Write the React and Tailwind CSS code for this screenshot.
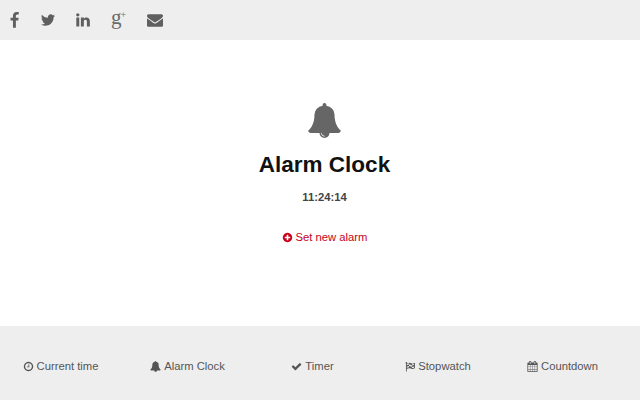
// Font Awesome 4 glyphs, the react-icons set only carries FA5+
const ICONS = {
  facebook: 'M1343 12v264h-157q-86 0-116 36t-30 108v189h293l-39 296h-254v759h-306v-759h-255v-296h255v-218q0-186 104-288.5t277-102.5q147 0 228 12z',
  twitter: 'M1684 408q-67 98-162 167 1 14 1 42 0 130-38 259.5t-115.5 248.5-184.5 210.5-258 146-323 54.5q-271 0-496-145 35 4 76 4 225 0 401-138-105-2-188-64.5t-114-159.5q33 5 61 5 43 0 85-11-112-23-185.5-111.5t-73.5-205.5v-4q68 38 146 41-66-44-105-115t-39-154q0-88 44-163 121 149 294.5 238.5t371.5 99.5q-8-38-8-74 0-134 94.5-228.5t228.5-94.5q140 0 236 102 109-21 205-78-37 115-142 178 93-10 186-50z',
  linkedin: 'M477 625v991h-330v-991h330zm21-306q1 73-50.5 122t-135.5 49h-2q-82 0-132-49t-50-122q0-74 51.5-122.5t134.5-48.5 133 48.5 51 122.5zm1166 729v568h-329v-530q0-105-40.5-164.5t-126.5-59.5q-63 0-105.5 34.5t-63.5 85.5q-11 30-11 81v553h-329q2-399 2-647t-1-296l-1-48h329v144h-2q20-32 41-56t56.5-52 87-43.5 114.5-15.5q171 0 275 113.5t104 332.5z',
  envelope: 'M1792 710v794q0 66-47 113t-113 47h-1472q-66 0-113-47t-47-113v-794q44 49 101 87 362 246 497 345 57 42 92.5 65.5t94.5 48 110 24.5h2q51 0 110-24.5t94.5-48 92.5-65.5q170-123 498-345 57-39 100-87zm0-294q0 79-49 151t-122 123q-376 261-468 325-10 7-42.5 30.5t-54 38-52 32.5-57.5 27-50 9h-2q-23 0-50-9t-57.5-27-52-32.5-54-38-42.5-30.5q-91-64-262-182.5t-205-142.5q-62-42-117-115.5t-55-136.5q0-78 41.5-130t118.5-52h1472q65 0 112.5 47t47.5 113z',
  bell: 'M912 1696q0-16-16-16-59 0-101.5-42.5t-42.5-101.5q0-16-16-16t-16 16q0 73 51.5 124.5t124.5 51.5q16 0 16-16zm816-288q0 52-38 90t-90 38h-448q0 106-75 181t-181 75-181-75-75-181h-448q-52 0-90-38t-38-90q50-42 91-88t85-119.5 74.5-158.5 50-206 19.5-260q0-152 117-282.5t307-158.5q-8-19-8-39 0-40 28-68t68-28 68 28 28 68q0 20-8 39 190 28 307 158.5t117 282.5q0 139 19.5 260t50 206 74.5 158.5 85 119.5 91 88z',
  plusCircle: 'M1344 960v-128q0-26-19-45t-45-19h-256v-256q0-26-19-45t-45-19h-128q-26 0-45 19t-19 45v256h-256q-26 0-45 19t-19 45v128q0 26 19 45t45 19h256v256q0 26 19 45t45 19h128q26 0 45-19t19-45v-256h256q26 0 45-19t19-45zm320-64q0 209-103 385.5t-279.5 279.5-385.5 103-385.5-103-279.5-279.5-103-385.5 103-385.5 279.5-279.5 385.5-103 385.5 103 279.5 279.5 103 385.5z',
  clock: 'M1024 544v448q0 14-9 23t-23 9h-320q-14 0-23-9t-9-23v-64q0-14 9-23t23-9h224v-352q0-14 9-23t23-9h64q14 0 23 9t9 23zm416 352q0-148-73-273t-198-198-273-73-273 73-198 198-73 273 73 273 198 198 273 73 273-73 198-198 73-273zm224 0q0 209-103 385.5t-279.5 279.5-385.5 103-385.5-103-279.5-279.5-103-385.5 103-385.5 279.5-279.5 385.5-103 385.5 103 279.5 279.5 103 385.5z',
  check: 'M1671 566q0 40-28 68l-724 724-136 136q-28 28-68 28t-68-28l-136-136-362-362q-28-28-28-68t28-68l136-136q28-28 68-28t68 28l294 295 656-657q28-28 68-28t68 28l136 136q28 28 28 68z',
  flag: 'M832 1000v-192q-181 16-384 117v185q205-96 384-110zm0-418v-197q-172 8-384 126v189q215-111 384-118zm832 463v-184q-235 116-384 71v-224q-20-6-39-15-5-3-33-17t-34.5-17-31.5-15-34.5-15.5-32.5-13-36-12.5-35-8.5-39.5-7.5-39.5-4-44-2q-23 0-49 3v222h19q102 0 192.5 29t197.5 82q19 9 39 15v188q42 17 91 17 120 0 293-92zm0-427v-189q-169 91-306 91-45 0-78-8v196q148 42 384-90zm-1152-318q0 35-17.5 64t-46.5 46v1266q0 14-9 23t-23 9h-64q-14 0-23-9t-9-23v-1266q-29-17-46.5-46t-17.5-64q0-53 37.5-90.5t90.5-37.5 90.5 37.5 37.5 90.5zm1280 64v763q0 39-35 57-10 5-17 9-218 116-369 116-88 0-158-35l-28-14q-64-33-99-48t-91-29-114-14q-102 0-235.5 44t-228.5 102q-15 9-33 9-16 0-32-8-32-19-32-56v-742q0-35 31-55 35-21 78.5-42.5t114-52 152.5-49.5 155-19q112 0 209 31t209 86q38 19 89 19 122 0 310-112 22-12 31-17 31-16 62 2 31 20 31 55z',
  calendar: 'M192 1664h288v-288h-288v288zm352 0h320v-288h-320v288zm-352-352h288v-320h-288v320zm352 0h320v-320h-320v320zm-352-384h288v-288h-288v288zm736 736h320v-288h-320v288zm-384-736h320v-288h-320v288zm768 736h288v-288h-288v288zm-384-352h320v-320h-320v320zm-352-864v-288q0-13-9.5-22.5t-22.5-9.5h-64q-13 0-22.5 9.5t-9.5 22.5v288q0 13 9.5 22.5t22.5 9.5h64q13 0 22.5-9.5t9.5-22.5zm736 864h288v-320h-288v320zm-384-384h320v-288h-320v288zm384 0h288v-288h-288v288zm32-480v-288q0-13-9.5-22.5t-22.5-9.5h-64q-13 0-22.5 9.5t-9.5 22.5v288q0 13 9.5 22.5t22.5 9.5h64q13 0 22.5-9.5t9.5-22.5zm384-64v1280q0 52-38 90t-90 38h-1408q-52 0-90-38t-38-90v-1280q0-52 38-90t90-38h128v-96q0-66 47-113t113-47h64q66 0 113 47t47 113v96h384v-96q0-66 47-113t113-47h64q66 0 113 47t47 113v96h128q52 0 90 38t38 90z',
}

const Fa = ({ name, size, className }) => (
  <svg viewBox="0 0 1792 1792" width={size} height={size} fill="currentColor" className={className}>
    <path d={ICONS[name]} />
  </svg>
)

const navItems = [
  { label: 'Current time', icon: 'clock', cls: 'pr-1' },
  { label: 'Alarm Clock', icon: 'bell', cls: '' },
  { label: 'Timer', icon: 'check', cls: '' },
  { label: 'Stopwatch', icon: 'flag', cls: '' },
  { label: 'Countdown', icon: 'calendar', cls: '' },
]

export default function App() {
  return (
    <div className="flex h-[400px] w-[640px] flex-col overflow-hidden bg-white font-['Liberation_Sans',Arial,sans-serif] text-[#333]">
      {/* Social bar */}
      <div className="flex h-10 shrink-0 items-center bg-[#eeeeee] pl-[6px] text-[#5f5f5f]">
        <Fa name="facebook" size={17} />
        <Fa name="twitter" size={16} className="ml-[17px]" />
        <Fa name="linkedin" size={16} className="ml-[19px]" />
        <div className="ml-[20px] -mt-[6px] flex w-[16px] font-['Liberation_Serif',serif] text-[21px] leading-none font-normal text-[#6a6a6a]">
          g<span className="-ml-[1px] text-[10px] leading-[16px]">+</span>
        </div>
        <Fa name="envelope" size={16} className="ml-[20px]" />
      </div>

      {/* Main */}
      <div className="flex flex-1 flex-col items-center pt-[63px] pl-[9px]">
        <Fa name="bell" size={35} className="text-[#666]" />
        <h1 className="mt-[12px] text-[22.5px] leading-[30px] font-bold text-[#111]">Alarm Clock</h1>
        <div className="mt-[10px] text-[11.25px] leading-[14px] font-bold text-[#444]">11:24:14</div>
        <div className="mt-[26px] flex items-center gap-[3px] text-[11.25px] leading-[14px] text-[#c9001a]">
          <Fa name="plusCircle" size={11} />
          <span>Set new alarm</span>
        </div>
      </div>

      {/* Footer nav */}
      <div className="h-[74px] shrink-0 bg-[#eeeeee] pt-[6px] text-[11.25px] text-[#555]">
        <div className="grid h-full w-[625px] grid-cols-5 items-center">
          {navItems.map(item => (
            <div key={item.label} className={`flex items-center justify-center gap-[3px] ${item.cls}`}>
              <Fa name={item.icon} size={11} />
              <span>{item.label}</span>
            </div>
          ))}
        </div>
      </div>
    </div>
  )
}
